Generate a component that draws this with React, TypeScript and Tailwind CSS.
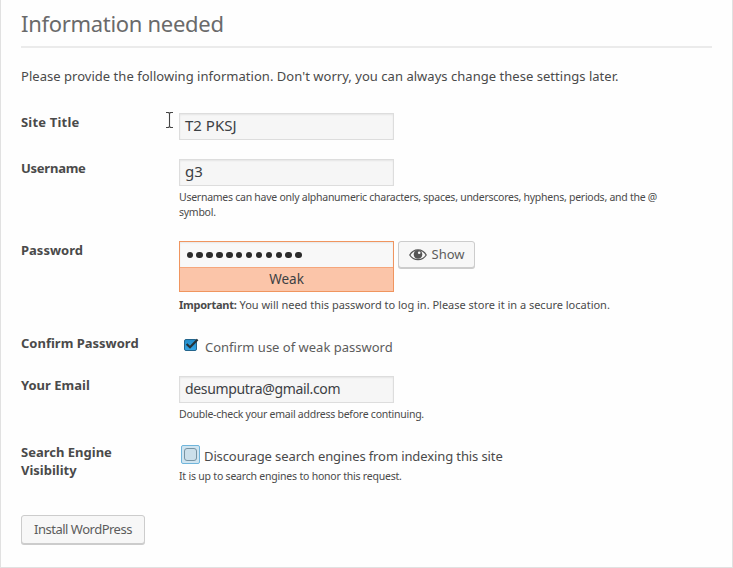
import type { ReactNode } from "react";

const field =
  "flex h-[27px] w-[215px] items-center border border-[#ddd] bg-[#f6f6f6] px-[5px] pb-[2px] text-[15px] text-[#3c4044] shadow-[inset_0_1px_2px_rgba(0,0,0,0.07)]";
const button =
  "flex items-center justify-center rounded-[3px] border border-[#ccc] bg-[#f7f7f7] text-[13px] text-[#5c5c5c] shadow-[0_1px_0_#ccc]";
const hint = "mt-[4px] text-[10.5px] leading-[15px] whitespace-nowrap";

function Row({ label, className, children }: { label: ReactNode; className: string; children: ReactNode }) {
  return (
    <div className={`flex ${className}`}>
      <div className="w-[158px] shrink-0 text-[13px] leading-[18px] font-bold">{label}</div>
      <div className="min-w-0 flex-1">{children}</div>
    </div>
  );
}

function EyeIcon() {
  return (
    <svg width="18" height="14" viewBox="0 0 18 14" fill="none">
      <path d="M.8 7C4.6.1 13.4.1 17.2 7 13.4 13.2 4.6 13.2.8 7Z" stroke="#555" strokeWidth="1.3" />
      <circle cx="9" cy="6.4" r="4.3" fill="#555" />
      <circle cx="10.2" cy="4.8" r="1.3" fill="#f7f7f7" />
    </svg>
  );
}

function CheckedBox() {
  return (
    <svg width="16" height="15" viewBox="0 0 16 15">
      <defs>
        <linearGradient id="blue" x1="0" y1="0" x2="0" y2="1">
          <stop stopColor="#238cc9" />
          <stop offset="1" stopColor="#36a5e5" />
        </linearGradient>
      </defs>
      <rect x="1.5" y="2.5" width="12" height="11" rx="1.5" fill="url(#blue)" stroke="#24658c" />
      <path d="M3.6 7 7 10.3 14.6 2.4" fill="none" stroke="#263238" strokeWidth="2.2" />
    </svg>
  );
}

function TextCursor() {
  return (
    <svg className="absolute top-[111px] left-[165px]" width="8" height="18" viewBox="0 0 8 18" fill="none">
      <path d="M0 1.5h2.5l1 1 1-1H7M3.5 2v13M0 16.5h2.5l1-1 1 1H7" stroke="#444" strokeWidth="1.1" />
    </svg>
  );
}

export default function App() {
  return (
    <div className="relative h-[568px] w-[733px] border border-t-0 border-[#e1e1e1] bg-[#fefefe] px-5 pt-[8px] font-['Noto_Sans','Open_Sans',sans-serif] text-[#4a4a4a]">
      <h1 className="h-[40px] w-[691px] border-b-2 border-[#ebebeb] text-[22px] leading-[30px] tracking-[-0.3px] whitespace-nowrap text-[#6a6a6a]">
        Information needed
      </h1>
      <p className="mt-[18px] h-[20px] text-[13px] leading-[20px] tracking-[0.03px] whitespace-nowrap">
        Please provide the following information. Don't worry, you can always change these settings later.
      </p>

      <div className="mt-[27px]">
        <Row label={<span className="tracking-[0.2px]">Site Title</span>} className="h-[46px]">
          <div className={field}>T2 PKSJ</div>
        </Row>
        <Row label={<span className="tracking-[-0.25px]">Username</span>} className="h-[82px]">
          <div className={field}>g3</div>
          <p className={hint}>
            <span className="tracking-[-0.26px]">
              Usernames can have only alphanumeric characters, spaces, underscores, hyphens, periods, and the @
              <br />
              symbol.
            </span>
          </p>
        </Row>
        <Row label="Password" className="h-[93px]">
          <div className="flex">
            <div className="w-[215px] border border-[#f0955f] text-[#3c4044]">
              <div className="flex h-[25px] items-center gap-[3.4px] bg-[#f8f8f8] pt-px pl-[6.5px] shadow-[inset_0_1px_2px_rgba(0,0,0,0.07)]">
                {Array.from({ length: 12 }, (_, i) => (
                  <i key={i} className="size-[6.5px] rounded-full bg-[#2b2b2b]" />
                ))}
              </div>
              <div className="h-[24px] border-t border-[#f5a67c] bg-[#fbc5a9] text-center text-[13.5px] leading-[22px]">
                Weak
              </div>
            </div>
            <div className={`${button} ml-1 h-[27px] w-[77px] gap-[5px]`}>
              <EyeIcon />
              <span>Show</span>
            </div>
          </div>
          <p className="mt-[5px] text-[11px] leading-[16px] tracking-[-0.01px] whitespace-nowrap">
            <b className="tracking-[-0.25px]">Important:</b> You will need this password to log in. Please store it in a
            secure location.
          </p>
        </Row>
        <Row label="Confirm Password" className="h-[42px]">
          <div className="flex pt-[3px] pl-[4px]">
            <CheckedBox />
            <span className="mt-px ml-[6px] text-[13px] leading-[18px] whitespace-nowrap text-[#5c5c5c]">
              Confirm use of weak password
            </span>
          </div>
        </Row>
        <Row label="Your Email" className="h-[68px]">
          <div className={field}>
            <span className="text-[14px] tracking-[-0.34px]">desumputra@gmail.com</span>
          </div>
          <p className={hint}>
            <span className="tracking-[-0.25px]">Double-check your email address before continuing.</span>
          </p>
        </Row>
        <Row
          label={
            <>
              <span className="block leading-[17px]">Search Engine</span>
              <span className="block leading-[18px]">Visibility</span>
            </>
          }
          className="h-[71px]"
        >
          <div className="flex pl-[2px]">
            <div className="mt-px flex size-[19px] items-center justify-center rounded-[2px] border border-[#70b5db] bg-[#cfe4f0]">
              <div className="size-[13px] rounded-[3px] border border-[#7893a2] bg-[#cbdfea]" />
            </div>
            <span className="mt-[3px] ml-[4px] text-[13px] leading-[18px] tracking-[-0.11px] whitespace-nowrap">
              Discourage search engines from indexing this site
            </span>
          </div>
          <p className={hint}>
            <span className="tracking-[-0.21px]">It is up to search engines to honor this request.</span>
          </p>
        </Row>
      </div>
      <div className={`${button} h-[29px] w-[124px]`}>
        <span className="tracking-[-0.5px]">Install WordPress</span>
      </div>
      <TextCursor />
    </div>
  );
}
